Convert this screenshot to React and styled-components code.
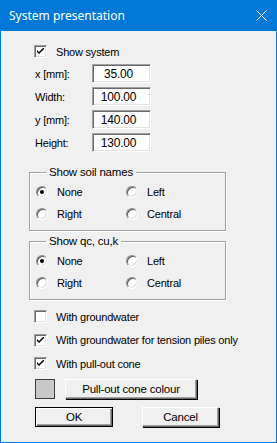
import React from 'react';
import styled, { createGlobalStyle } from 'styled-components';

const GlobalStyle = createGlobalStyle`
  html, body {
    margin: 0;
    padding: 0;
    background: #f0f0f0;
  }
  * {
    box-sizing: border-box;
  }
`;

const Window = styled.div`
  width: 277px;
  height: 443px;
  background: #f0f0f0;
  border: 1px solid #0078d7;
  border-top: none;
  display: flex;
  flex-direction: column;
  font-family: "Liberation Sans", Arial, sans-serif;
  font-size: 11px;
  letter-spacing: -0.2px;
  color: #000;
`;

const TitleBar = styled.div`
  height: 31px;
  margin: 0 -1px;
  background: #0078d7;
  color: #fff;
  display: flex;
  align-items: center;
  justify-content: space-between;
  padding: 0 10px 0 9px;
  font-family: "Noto Sans", "Open Sans", sans-serif;
  font-size: 12px;
  letter-spacing: 0;
`;

const CloseIcon = () => (
  <svg width="11" height="11" viewBox="0 0 11 11">
    <path d="M0.5 0.5 L10.5 10.5 M10.5 0.5 L0.5 10.5" stroke="#fff" strokeWidth="1" />
  </svg>
);

const Body = styled.div`
  display: flex;
  flex-direction: column;
  padding: 9px 0 0 27px;
`;

const CheckRow = styled.label`
  display: flex;
  align-items: center;
  height: ${(p) => p.$h || 23}px;
  padding-left: 6px;
  gap: 9px;
`;

const Box = styled.span`
  width: 13px;
  height: 13px;
  background: #fff;
  border: 1px solid;
  border-color: #a0a0a0 #fff #fff #a0a0a0;
  box-shadow: inset 1px 1px 0 #696969, inset -1px -1px 0 #e3e3e3;
  display: flex;
  align-items: center;
  justify-content: center;
  flex: none;
`;

const Tick = () => (
  <svg width="7" height="7" viewBox="0 0 7 7">
    <path d="M0 2 L0 4 L2 6 L7 1 L7 -1 L2 4 Z" fill="#000" />
  </svg>
);

const Checkbox = ({ checked, label, h }) => (
  <CheckRow $h={h}>
    <Box>{checked && <Tick />}</Box>
    <span>{label}</span>
  </CheckRow>
);

const FieldGrid = styled.div`
  display: grid;
  grid-template-columns: 57px 59px;
  row-gap: 4px;
  padding-left: 7px;
  margin-top: 1px;
  align-items: center;
`;

const Input = styled.div`
  height: 19px;
  background: #fff;
  border: 1px solid;
  border-color: #a0a0a0 #fff #fff #a0a0a0;
  box-shadow: inset 1px 1px 0 #696969, inset -1px -1px 0 #e3e3e3;
  display: flex;
  align-items: center;
  justify-content: center;
  padding-right: 6px;
  font-size: 12px;
`;

const Group = styled.fieldset`
  width: 197px;
  margin: ${(p) => p.$top}px 0 0 1px;
  padding: 3px 0 5px 6px;
  border: 1px solid #a0a0a0;
  box-shadow: 1px 1px 0 #fff, inset 1px 1px 0 #fff;
  display: grid;
  grid-template-columns: 90px 90px;
`;

const Legend = styled.legend`
  margin-left: 10px;
  padding: 0 3px;
  font-size: 11.5px;
`;

const RadioRow = styled.label`
  display: flex;
  align-items: center;
  height: 22px;
  gap: 9px;
`;

const Circle = styled.span`
  width: 12px;
  height: 12px;
  border-radius: 50%;
  background: #fff;
  border: 1px solid;
  border-color: #8a8a8a #fff #fff #8a8a8a;
  box-shadow: inset 1px 1px 0 #5a5a5a, inset -1px -1px 0 #dcdcdc;
  display: flex;
  align-items: center;
  justify-content: center;
  flex: none;
  &::after {
    content: '';
    width: 4px;
    height: 4px;
    border-radius: 50%;
    background: ${(p) => (p.$on ? '#000' : 'transparent')};
  }
`;

const Radio = ({ on, label }) => (
  <RadioRow>
    <Circle $on={on} />
    <span>{label}</span>
  </RadioRow>
);

const Options = styled.div`
  display: flex;
  flex-direction: column;
  margin-top: 5px;
`;

const ColourRow = styled.div`
  display: flex;
  align-items: center;
  gap: 10px;
  padding-left: 7px;
  margin-top: 4px;
`;

const Swatch = styled.span`
  width: 20px;
  height: 20px;
  background: #c8c8c8;
  border: 1px solid #3c3c3c;
`;

const Button = styled.button`
  width: ${(p) => p.$w}px;
  height: 20px;
  background: #f0f0f0;
  font: inherit;
  font-size: 11.5px;
  letter-spacing: inherit;
  color: #000;
  padding: 0;
  border: 1px solid;
  border-color: ${(p) => (p.$default ? '#000' : '#fff #696969 #696969 #fff')};
  box-shadow: ${(p) =>
    p.$default
      ? 'inset 1px 1px 0 #fff, inset -1px -1px 0 #696969, inset -2px -2px 0 #a0a0a0'
      : 'inset -1px -1px 0 #a0a0a0, 1px 1px 0 #000'};
`;

const ButtonRow = styled.div`
  display: flex;
  justify-content: space-between;
  width: 191px;
  padding-left: 7px;
  margin-top: 8px;
`;

export default function App() {
  return (
    <>
      <GlobalStyle />
      <Window>
        <TitleBar>
          <span>System presentation</span>
          <CloseIcon />
        </TitleBar>
        <Body>
          <Checkbox checked label="Show system" />
          <FieldGrid>
            <span>x [mm]:</span>
            <Input>35.00</Input>
            <span>Width:</span>
            <Input>100.00</Input>
            <span>y [mm]:</span>
            <Input>140.00</Input>
            <span>Height:</span>
            <Input>130.00</Input>
          </FieldGrid>
          <Group $top={14}>
            <Legend>Show soil names</Legend>
            <Radio on label="None" />
            <Radio label="Left" />
            <Radio label="Right" />
            <Radio label="Central" />
          </Group>
          <Group $top={4}>
            <Legend>Show qc, cu,k</Legend>
            <Radio on label="None" />
            <Radio label="Left" />
            <Radio label="Right" />
            <Radio label="Central" />
          </Group>
          <Options>
            <Checkbox label="With groundwater" h={23} />
            <Checkbox checked label="With groundwater for tension piles only" h={24} />
            <Checkbox checked label="With pull-out cone" h={23} />
          </Options>
          <ColourRow>
            <Swatch />
            <Button $w={132}>Pull-out cone colour</Button>
          </ColourRow>
          <ButtonRow>
            <Button $w={78} $default>OK</Button>
            <Button $w={77}>Cancel</Button>
          </ButtonRow>
        </Body>
      </Window>
    </>
  );
}
